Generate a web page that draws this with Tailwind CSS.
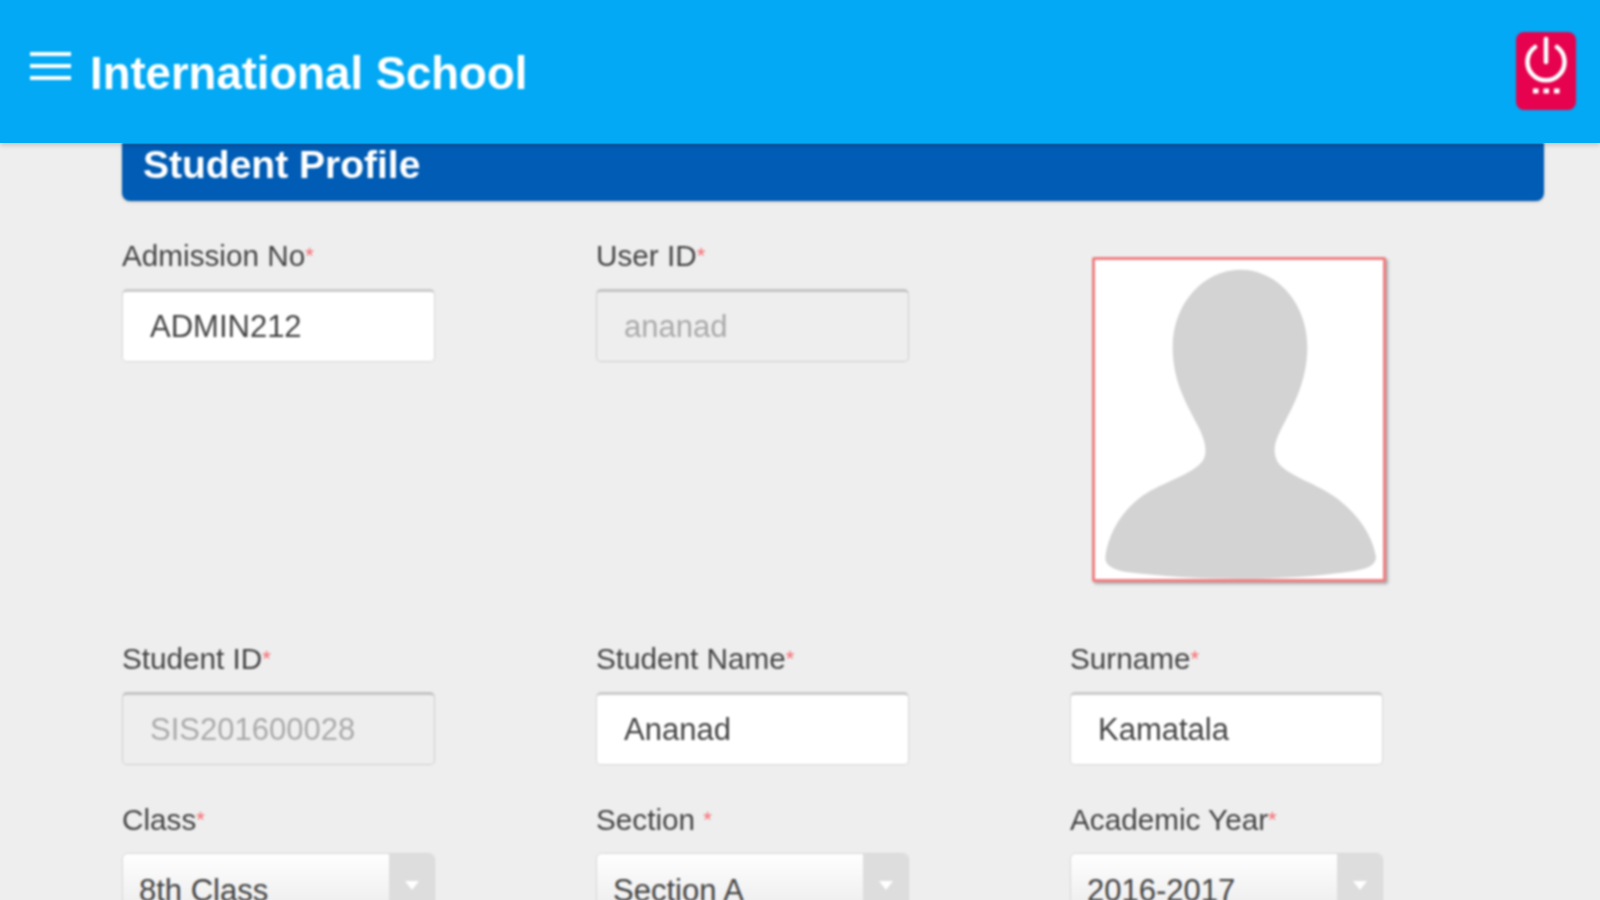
<!DOCTYPE html>
<html lang="en" class="bg-[#eeeeee]">
<head>
    <meta charset="UTF-8">
    <title>Student Profile</title>
    <script src="https://cdn.jsdelivr.net/npm/@tailwindcss/browser@4"></script>
</head>
<body class="h-[900px] overflow-hidden font-['Liberation_Sans',Arial,sans-serif] text-[#444444]">
    <header class="relative z-10 h-[143px] bg-[#03a9f4] pl-[30px] pr-[24px] shadow-[0_2px_5px_rgba(0,0,0,0.2)]">
      <div class="flex items-start blur-[0.8px]">
        <div class="mt-[52px] w-[41px] flex flex-col gap-[8px]">
            <div class="h-[4px] bg-white"></div>
            <div class="h-[4px] bg-white"></div>
            <div class="h-[4px] bg-white"></div>
        </div>
        <h1 class="ml-[19px] mt-[48px] text-[45.5px] leading-[52px] font-bold text-white">International School</h1>
        <button class="ml-auto mt-[32px] w-[60px] h-[78px] rounded-[8px] bg-[#e6024f]">
            <svg width="60" height="78" viewBox="0 0 60 78" fill="none" stroke="white" stroke-width="4.5" stroke-linecap="round">
                <path d="M19 15 A18.5 18.5 0 1 0 41 15"/>
                <path d="M30 7 V30"/>
                <path d="M17 59 H22.500 M27.500 59 H33 M38 59 H43.500" stroke-width="5" stroke-linecap="butt"/>
            </svg>
        </button>
      </div>
    </header>

    <main class="pl-[122px] pr-[56px] blur-[0.8px]">
        <div class="h-[58px] bg-[#005cb4] rounded-b-[8px] pl-[21px] flex items-center shadow-[0_1px_3px_rgba(0,0,0,0.2)]">
            <h2 class="text-[39px] font-bold text-white -mt-[14px]">Student Profile</h2>
        </div>

        <div class="grid grid-cols-[313px_313px_313px] gap-x-[161px] mt-[36px]">
            <div class="h-[403px]">
                <label class="block h-[52px] text-[29.7px] leading-[38px]">Admission No<span class="text-[#f86a72] text-[22px] align-top">*</span></label>
                <input value="ADMIN212" class="w-full h-[73px] px-[27px] text-[31px] text-[#444444] bg-white rounded-[5px] border border-[#d8d8d8] border-t-[3px] border-t-[#cccccc] outline-none">
            </div>
            <div>
                <label class="block h-[52px] text-[29.7px] leading-[38px]">User ID<span class="text-[#f86a72] text-[22px] align-top">*</span></label>
                <input value="ananad" disabled class="w-full h-[73px] px-[27px] text-[31px] text-[#aaaaaa] bg-[#eeeeee] rounded-[5px] border border-[#cfcfcf] border-t-[3px] border-t-[#c4c4c4] outline-none">
            </div>
            <div>
                <div class="ml-[22px] mt-[20px] w-[294px] h-[325px] bg-white border-[3px] border-[#f07f82] rounded-[2px] shadow-[2px_2px_3px_rgba(0,0,0,0.3)]">
                    <svg class="w-full h-full" viewBox="106 59 860 957" preserveAspectRatio="none">
                        <path fill="#d3d3d3" d="M540 88 C650 88 740 190 740 320 C740 430 690 510 660 570 C640 610 635 640 655 670 C690 710 770 730 830 775 C900 830 935 890 945 950 C945 975 920 985 880 992 C760 1010 640 1015 540 1015 C420 1015 300 1008 200 995 C160 988 135 975 137 950 C145 890 175 820 250 765 C310 725 390 705 425 665 C445 640 435 600 415 560 C385 500 338 430 338 320 C338 190 430 88 540 88 Z"/>
                    </svg>
                </div>
            </div>

            <div class="h-[161px]">
                <label class="block h-[52px] text-[29.7px] leading-[38px]">Student ID<span class="text-[#f86a72] text-[22px] align-top">*</span></label>
                <input value="SIS201600028" disabled class="w-full h-[73px] px-[27px] text-[31px] text-[#aaaaaa] bg-[#eeeeee] rounded-[5px] border border-[#cfcfcf] border-t-[3px] border-t-[#c4c4c4] outline-none">
            </div>
            <div>
                <label class="block h-[52px] text-[29.7px] leading-[38px]">Student Name<span class="text-[#f86a72] text-[22px] align-top">*</span></label>
                <input value="Ananad" class="w-full h-[73px] px-[27px] text-[31px] text-[#444444] bg-white rounded-[5px] border border-[#d8d8d8] border-t-[3px] border-t-[#cccccc] outline-none">
            </div>
            <div>
                <label class="block h-[52px] text-[29.7px] leading-[38px]">Surname<span class="text-[#f86a72] text-[22px] align-top">*</span></label>
                <input value="Kamatala" class="w-full h-[73px] px-[27px] text-[31px] text-[#444444] bg-white rounded-[5px] border border-[#d8d8d8] border-t-[3px] border-t-[#cccccc] outline-none">
            </div>

            <div>
                <label class="block h-[52px] text-[29.7px] leading-[38px]">Class<span class="text-[#f86a72] text-[22px] align-top">*</span></label>
                <div class="h-[73px] flex rounded-[6px] border border-[#d8d8d8] overflow-hidden">
                    <div class="flex-1 bg-gradient-to-b from-white to-[#e8e8e8] pl-[16px] pt-[18px] text-[31px] leading-[38px]">8th Class</div>
                    <div class="w-[45px] bg-[#dddddd] flex justify-center pt-[27px]">
                        <div class="w-0 h-0 border-x-[7px] border-x-transparent border-t-[9px] border-t-white"></div>
                    </div>
                </div>
            </div>
            <div>
                <label class="block h-[52px] text-[29.7px] leading-[38px]">Section <span class="text-[#f86a72] text-[22px] align-top">*</span></label>
                <div class="h-[73px] flex rounded-[6px] border border-[#d8d8d8] overflow-hidden">
                    <div class="flex-1 bg-gradient-to-b from-white to-[#e8e8e8] pl-[16px] pt-[18px] text-[31px] leading-[38px]">Section A</div>
                    <div class="w-[45px] bg-[#dddddd] flex justify-center pt-[27px]">
                        <div class="w-0 h-0 border-x-[7px] border-x-transparent border-t-[9px] border-t-white"></div>
                    </div>
                </div>
            </div>
            <div>
                <label class="block h-[52px] text-[29.7px] leading-[38px]">Academic Year<span class="text-[#f86a72] text-[22px] align-top">*</span></label>
                <div class="h-[73px] flex rounded-[6px] border border-[#d8d8d8] overflow-hidden">
                    <div class="flex-1 bg-gradient-to-b from-white to-[#e8e8e8] pl-[16px] pt-[18px] text-[31px] leading-[38px]">2016-2017</div>
                    <div class="w-[45px] bg-[#dddddd] flex justify-center pt-[27px]">
                        <div class="w-0 h-0 border-x-[7px] border-x-transparent border-t-[9px] border-t-white"></div>
                    </div>
                </div>
            </div>
        </div>
    </main>
</body>
</html>
